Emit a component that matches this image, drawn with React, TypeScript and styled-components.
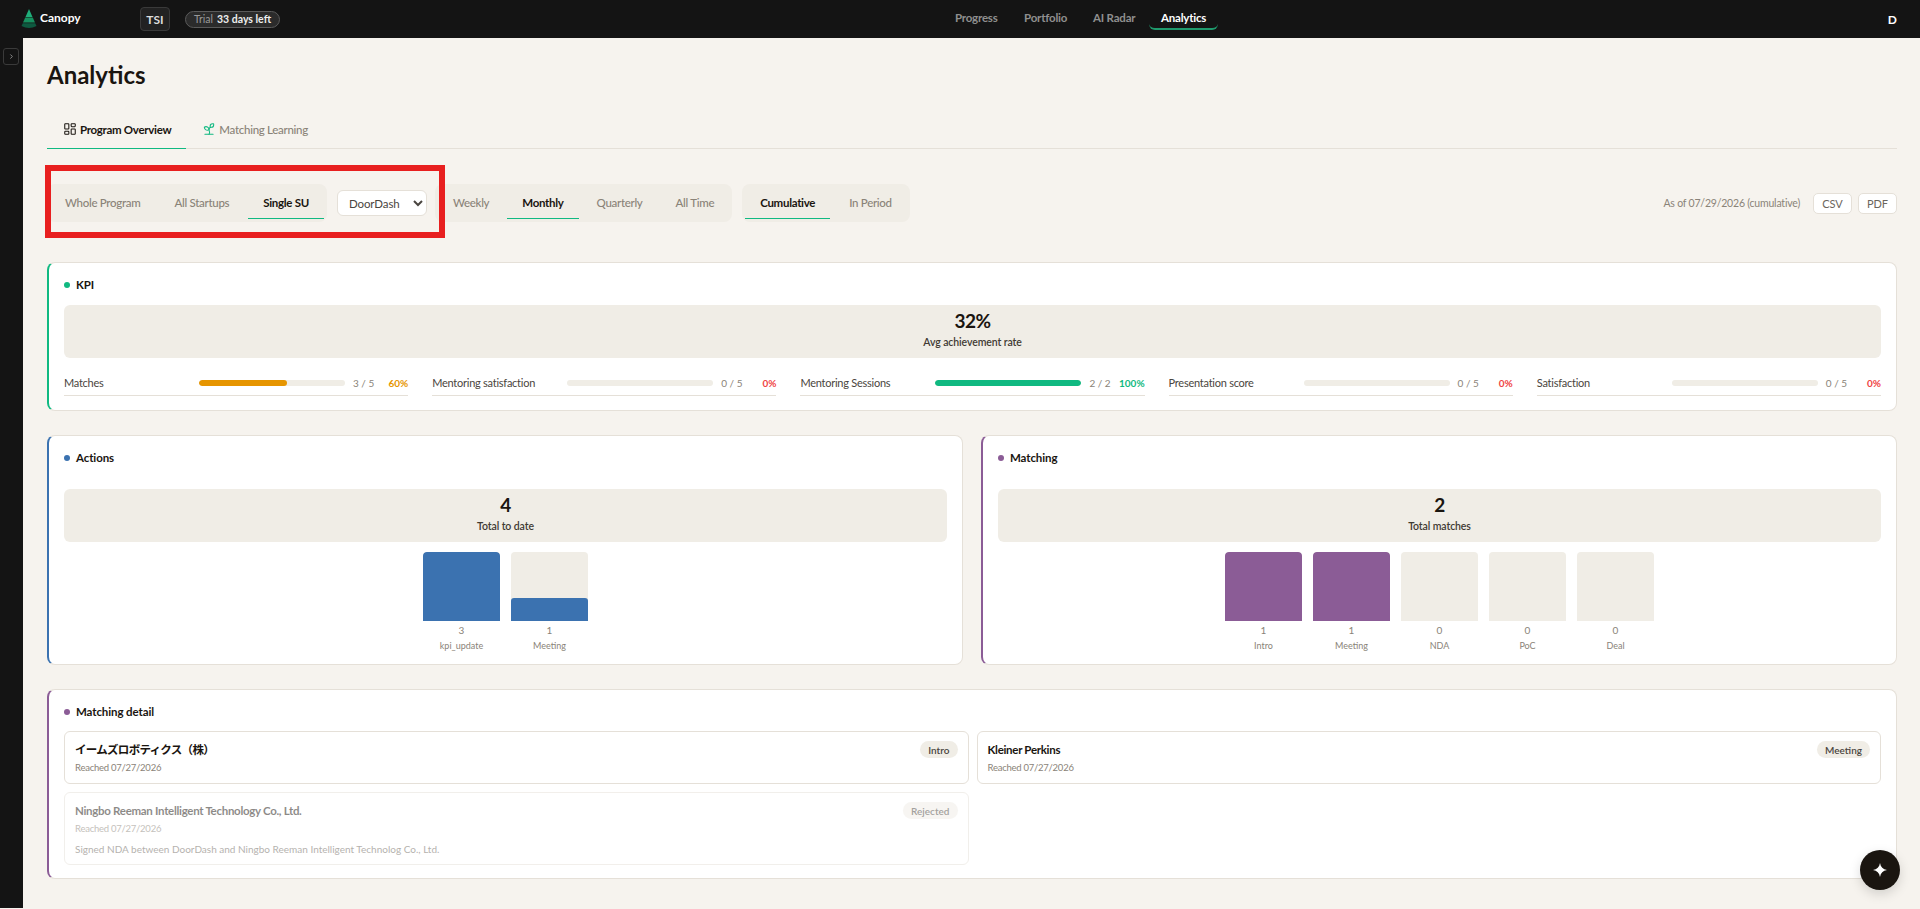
import styled, { createGlobalStyle } from 'styled-components';
import { LayoutDashboard, Sprout, ChevronRight } from 'lucide-react';

const GlobalStyle = createGlobalStyle`
  html, body {
    margin: 0;
    padding: 0;
    background: #f6f3ee;
    font-family: 'Lato', 'Noto Sans CJK JP', sans-serif;
    color: #1a1510;
  }
  * { box-sizing: border-box; }
`;

const GREEN = '#10b981';
const BLUE = '#3b72b0';
const PURPLE = '#8b5c96';

const kpis = [
  { label: 'Matches', value: '3 / 5', pct: 60, color: '#e69500' },
  { label: 'Mentoring satisfaction', value: '0 / 5', pct: 0, color: '#ef4444' },
  { label: 'Mentoring Sessions', value: '2 / 2', pct: 100, color: GREEN },
  { label: 'Presentation score', value: '0 / 5', pct: 0, color: '#ef4444' },
  { label: 'Satisfaction', value: '0 / 5', pct: 0, color: '#ef4444' },
];

const actions = [
  { label: 'kpi_update', value: 3, fill: 100 },
  { label: 'Meeting', value: 1, fill: 33.3 },
];

const funnel = [
  { label: 'Intro', value: 1, fill: 100 },
  { label: 'Meeting', value: 1, fill: 100 },
  { label: 'NDA', value: 0, fill: 0 },
  { label: 'PoC', value: 0, fill: 0 },
  { label: 'Deal', value: 0, fill: 0 },
];

function Logo() {
  return (
    <svg width="16" height="20" viewBox="0 0 16 20">
      <path d="M8 0 L11.5 8 H4.5 Z" fill="#1fae7a" />
      <path d="M4.2 8.6 H11.8 L14 13.6 H2 Z" fill="#17905f" />
      <path d="M1.8 14.2 H14.2 L15.5 17 Q8 21 .5 17 Z" fill="#0e5a40" />
    </svg>
  );
}

function Bars({ items, color }: { items: { label: string; value: number; fill: number }[]; color: string }) {
  return (
    <BarRow>
      {items.map((item) => (
        <BarCol key={item.label}>
          <BarTrack>
            <BarFill $color={color} style={{ height: `${item.fill}%` }} />
          </BarTrack>
          <BarValue>{item.value}</BarValue>
          <BarLabel>{item.label}</BarLabel>
        </BarCol>
      ))}
    </BarRow>
  );
}

export default function App() {
  return (
    <>
      <GlobalStyle />
      <TopBar>
        <Brand>
          <Logo />
          <BrandName>Canopy</BrandName>
        </Brand>
        <OrgChip>TSI</OrgChip>
        <TrialPill>
          Trial <b>33 days left</b>
        </TrialPill>
        <Nav>
          <NavItem>Progress</NavItem>
          <NavItem>Portfolio</NavItem>
          <NavItem>AI Radar</NavItem>
          <NavItem $active>Analytics</NavItem>
        </Nav>
        <UserInitial>D</UserInitial>
      </TopBar>
      <Body>
        <Rail>
          <RailToggle>
            <ChevronRight size={7} strokeWidth={3} />
          </RailToggle>
        </Rail>
        <Main>
          <Title>Analytics</Title>
          <Tabs>
            <Tab $active>
              <LayoutDashboard size={14} strokeWidth={1.8} />
              Program Overview
            </Tab>
            <Tab>
              <Sprout size={14} strokeWidth={1.8} color={GREEN} />
              Matching Learning
            </Tab>
          </Tabs>

          <FilterBar>
            <Segment>
              <SegButton>Whole Program</SegButton>
              <SegButton>All Startups</SegButton>
              <SegButton $active>Single SU</SegButton>
            </Segment>
            <StartupSelect defaultValue="DoorDash">
              <option>DoorDash</option>
            </StartupSelect>
            <Segment $gap={3}>
              <SegButton>Weekly</SegButton>
              <SegButton $active>Monthly</SegButton>
              <SegButton>Quarterly</SegButton>
              <SegButton>All Time</SegButton>
            </Segment>
            <Segment>
              <SegButton $active>Cumulative</SegButton>
              <SegButton>In Period</SegButton>
            </Segment>
            <AsOf>As of 07/29/2026 (cumulative)</AsOf>
            <ExportButton>CSV</ExportButton>
            <ExportButton>PDF</ExportButton>
            <Highlight />
          </FilterBar>

          <Card $accent={GREEN}>
            <CardHead $gap={13}>
              <Dot $color={GREEN} />
              KPI
            </CardHead>
            <Summary>
              <BigNumber>32%</BigNumber>
              <SummaryLabel>Avg achievement rate</SummaryLabel>
            </Summary>
            <KpiGrid>
              {kpis.map((kpi) => (
                <KpiRow key={kpi.label}>
                  <KpiLabel>{kpi.label}</KpiLabel>
                  <KpiTrack>
                    <KpiFill $color={kpi.color} style={{ width: `${kpi.pct}%` }} />
                  </KpiTrack>
                  <KpiValue>{kpi.value}</KpiValue>
                  <KpiPct $color={kpi.color}>{kpi.pct}%</KpiPct>
                </KpiRow>
              ))}
            </KpiGrid>
          </Card>

          <TwoCol>
            <Card $accent={BLUE}>
              <CardHead $gap={24}>
                <Dot $color={BLUE} />
                Actions
              </CardHead>
              <Summary>
                <BigNumber>4</BigNumber>
                <SummaryLabel>Total to date</SummaryLabel>
              </Summary>
              <Bars items={actions} color={BLUE} />
            </Card>
            <Card $accent={PURPLE}>
              <CardHead $gap={24}>
                <Dot $color={PURPLE} />
                Matching
              </CardHead>
              <Summary>
                <BigNumber>2</BigNumber>
                <SummaryLabel>Total matches</SummaryLabel>
              </Summary>
              <Bars items={funnel} color={PURPLE} />
            </Card>
          </TwoCol>

          <Card $accent={PURPLE}>
            <CardHead $gap={12}>
              <Dot $color={PURPLE} />
              Matching detail
            </CardHead>
            <DetailGrid>
              <DetailItem>
                <DetailTop>
                  <JapaneseName>イームズロボティクス（株）</JapaneseName>
                  <Badge>Intro</Badge>
                </DetailTop>
                <DetailDate>Reached 07/27/2026</DetailDate>
              </DetailItem>
              <DetailItem>
                <DetailTop>
                  <DetailName>Kleiner Perkins</DetailName>
                  <Badge>Meeting</Badge>
                </DetailTop>
                <DetailDate>Reached 07/27/2026</DetailDate>
              </DetailItem>
              <DetailItem $faded>
                <DetailTop>
                  <DetailName>Ningbo Reeman Intelligent Technology Co., Ltd.</DetailName>
                  <Badge>Rejected</Badge>
                </DetailTop>
                <DetailDate>Reached 07/27/2026</DetailDate>
                <DetailNote>Signed NDA between DoorDash and Ningbo Reeman Intelligent Technolog Co., Ltd.</DetailNote>
              </DetailItem>
            </DetailGrid>
          </Card>
        </Main>
      </Body>
      <Fab>
        <svg width="14" height="14" viewBox="0 0 14 14">
          <path d="M7 0 C7.6 4 10 6.4 14 7 C10 7.6 7.6 10 7 14 C6.4 10 4 7.6 0 7 C4 6.4 6.4 4 7 0 Z" fill="#fff" />
        </svg>
      </Fab>
    </>
  );
}

const TopBar = styled.header`
  height: 38px;
  background: #141414;
  display: flex;
  align-items: center;
  padding: 0 23px 0 21px;
  position: relative;
  color: #fff;
`;

const Brand = styled.div`
  display: flex;
  align-items: center;
  gap: 3px;
  width: 119px;
`;

const BrandName = styled.span`
  font-size: 12px;
  font-weight: 700;
  margin-top: -4px;
`;

const OrgChip = styled.div`
  width: 30px;
  height: 24px;
  display: flex;
  align-items: center;
  justify-content: center;
  background: #222;
  border: 1px solid #3a3a3a;
  border-radius: 4px;
  font-size: 12px;
  font-weight: 700;
  color: #ddd;
`;

const TrialPill = styled.div`
  margin-left: 15px;
  height: 17px;
  width: 95px;
  display: flex;
  align-items: center;
  justify-content: center;
  gap: 4px;
  background: #2b2b2b;
  border: 1px solid #5a5a5a;
  border-radius: 9px;
  font-size: 10.5px;
  color: #999;

  b {
    color: #eee;
    font-weight: 700;
  }
`;

const Nav = styled.nav`
  position: absolute;
  left: 942px;
  top: 0;
  height: 38px;
  padding-top: 6px;
  display: flex;
  align-items: flex-start;
`;

const NavItem = styled.span<{ $active?: boolean }>`
  height: 24px;
  width: 69px;
  padding-left: ${(p) => (p.$active ? '12px' : '13px')};
  display: flex;
  align-items: center;
  font-size: 11.5px;
  letter-spacing: -0.2px;
  font-weight: 700;
  color: ${(p) => (p.$active ? '#fff' : '#8f8f8f')};
  border-bottom: ${(p) => (p.$active ? '2px solid #1f9a6d' : '2px solid transparent')};
  border-radius: 0 0 6px 6px;
`;

const UserInitial = styled.div`
  margin-left: auto;
  font-size: 12px;
  font-weight: 700;
  color: #fff;
`;

const Body = styled.div`
  display: flex;
  background: #141414;
`;

const Rail = styled.aside`
  width: 23px;
  flex: none;
  padding: 10px 3px;
`;

const RailToggle = styled.div`
  width: 16px;
  height: 17px;
  border: 1px solid #3a3a3a;
  border-radius: 3px;
  display: flex;
  align-items: center;
  justify-content: center;
  color: #999;
`;

const Main = styled.main`
  flex: 1;
  min-width: 0;
  background: #f6f3ee;
  padding: 0 23px 29px 24px;
`;

const Title = styled.h1`
  margin: 0;
  padding-top: 22px;
  font-size: 24px;
  line-height: 30px;
  font-weight: 700;
`;

const Tabs = styled.div`
  margin-top: 28px;
  display: flex;
  border-bottom: 1px solid #e5e0d8;
`;

const Tab = styled.div<{ $active?: boolean }>`
  height: 31px;
  padding: 0 15px 8px 16px;
  display: flex;
  align-items: center;
  gap: 3px;
  font-size: 11.5px;
  letter-spacing: -0.3px;
  font-weight: ${(p) => (p.$active ? 700 : 500)};
  color: ${(p) => (p.$active ? '#1a1510' : '#8a8378')};
  border-bottom: 1px solid ${(p) => (p.$active ? GREEN : 'transparent')};
  margin-bottom: -1px;
`;

const FilterBar = styled.div`
  position: relative;
  margin-top: 35px;
  display: flex;
  align-items: center;
  gap: 10px;
`;

const Segment = styled.div<{ $gap?: number }>`
  height: 38px;
  padding: 3px;
  display: flex;
  gap: ${(p) => p.$gap ?? 4}px;
  background: #f0ede6;
  border-radius: 8px;
`;

const SegButton = styled.div<{ $active?: boolean }>`
  padding: 0 15px;
  display: flex;
  align-items: center;
  font-size: 11.5px;
  letter-spacing: -0.3px;
  font-weight: ${(p) => (p.$active ? 700 : 500)};
  color: ${(p) => (p.$active ? '#1a1510' : '#8a8378')};
  border-bottom: 1px solid ${(p) => (p.$active ? GREEN : 'transparent')};
`;

const StartupSelect = styled.select`
  width: 90px;
  height: 26px;
  margin-right: -2px;
  padding: 0 5px 0 7px;
  background: #fff;
  border: 1px solid #e5e0d8;
  border-radius: 6px;
  font-family: inherit;
  font-size: 11.5px;
  letter-spacing: -0.1px;
  color: #4a4540;
`;

const AsOf = styled.span`
  margin-left: auto;
  margin-right: 7px;
  font-size: 10.5px;
  letter-spacing: -0.2px;
  color: #8a8378;
`;

const ExportButton = styled.button`
  width: 39px;
  height: 21px;
  margin-left: -4px;
  padding: 0;
  background: #fff;
  border: 1px solid #e5e0d8;
  border-radius: 5px;
  font-family: inherit;
  font-size: 11px;
  color: #6b655c;
`;

const Highlight = styled.div`
  position: absolute;
  left: -2px;
  top: -19px;
  width: 400px;
  height: 73px;
  border: 6px solid #e81f1f;
  pointer-events: none;
`;

const Card = styled.section<{ $accent: string }>`
  margin-top: 24px;
  background: #fff;
  border: 1px solid #e5e0d8;
  border-left: 2px solid ${(p) => p.$accent};
  border-radius: 8px;
  padding: 15px 15px 12px 15px;
  ${FilterBar} + & {
    margin-top: 40px;
  }
`;

const CardHead = styled.div<{ $gap: number }>`
  display: flex;
  align-items: center;
  gap: 6px;
  font-size: 11.5px;
  letter-spacing: -0.1px;
  line-height: 14px;
  font-weight: 700;
  margin-bottom: ${(p) => p.$gap}px;
`;

const Dot = styled.span<{ $color: string }>`
  width: 6px;
  height: 6px;
  border-radius: 50%;
  background: ${(p) => p.$color};
`;

const Summary = styled.div`
  height: 53px;
  background: #f0ede6;
  border-radius: 6px;
  display: flex;
  flex-direction: column;
  align-items: center;
  padding-top: 4px;
`;

const BigNumber = styled.div`
  font-size: 19px;
  line-height: 24px;
  font-weight: 700;
  letter-spacing: -0.5px;
`;

const SummaryLabel = styled.div`
  margin-top: 2px;
  font-size: 10.5px;
  letter-spacing: -0.1px;
  line-height: 14px;
  font-weight: 600;
  color: #3f3a33;
`;

const KpiGrid = styled.div`
  margin: 12px 0 2px;
  display: grid;
  grid-template-columns: repeat(5, 1fr);
  gap: 24px;
`;

const KpiRow = styled.div`
  height: 26px;
  display: flex;
  align-items: center;
  border-bottom: 1px solid #e5e0d8;
`;

const KpiLabel = styled.span`
  width: 135px;
  flex: none;
  margin-top: -1px;
  font-size: 11px;
  letter-spacing: -0.25px;
  color: #4a4540;
`;

const KpiTrack = styled.div`
  width: 146px;
  height: 6px;
  flex: none;
  background: #f0ede6;
  border-radius: 3px;
  overflow: hidden;
`;

const KpiFill = styled.div<{ $color: string }>`
  height: 100%;
  background: ${(p) => p.$color};
  border-radius: 3px;
`;

const KpiValue = styled.span`
  margin-left: 8px;
  font-size: 10px;
  color: #8a8378;
`;

const KpiPct = styled.span<{ $color: string }>`
  margin-left: auto;
  font-size: 10px;
  font-weight: 700;
  color: ${(p) => p.$color};
`;

const TwoCol = styled.div`
  margin-top: 24px;
  display: grid;
  grid-template-columns: 1fr 1fr;
  gap: 18px;

  & > ${Card} {
    margin-top: 0;
  }
`;

const BarRow = styled.div`
  margin-top: 10px;
  display: flex;
  justify-content: center;
  gap: 11px;
`;

const BarCol = styled.div`
  width: 77px;
  text-align: center;
`;

const BarTrack = styled.div`
  height: 69px;
  display: flex;
  align-items: flex-end;
  background: #f0ede6;
  border-radius: 4px 4px 0 0;
  overflow: hidden;
`;

const BarFill = styled.div<{ $color: string }>`
  width: 100%;
  background: ${(p) => p.$color};
  border-radius: 3px 3px 0 0;
`;

const BarValue = styled.div`
  margin-top: 3px;
  font-size: 10px;
  line-height: 12px;
  color: #8a8378;
`;

const BarLabel = styled.div`
  margin-top: 4px;
  font-size: 9px;
  line-height: 12px;
  color: #8a8378;
`;

const DetailGrid = styled.div`
  margin-bottom: 1px;
  display: grid;
  grid-template-columns: 1fr 1fr;
  gap: 8px;
`;

const DetailItem = styled.div<{ $faded?: boolean }>`
  min-height: 53px;
  padding: 9px 10px 8px 10px;
  border: 1px solid #e5e0d8;
  border-radius: 6px;
  opacity: ${(p) => (p.$faded ? 0.5 : 1)};
`;

const DetailTop = styled.div`
  display: flex;
  justify-content: space-between;
  align-items: flex-start;
`;

const DetailName = styled.span`
  font-size: 11.5px;
  letter-spacing: -0.3px;
  line-height: 17px;
  font-weight: 700;
`;

const JapaneseName = styled(DetailName)`
  letter-spacing: -0.7px;
`;

const Badge = styled.span`
  height: 17px;
  padding: 0 8px;
  display: flex;
  align-items: center;
  background: #f0ede6;
  border-radius: 9px;
  font-size: 10px;
  font-weight: 600;
  color: #4a4540;
`;

const DetailDate = styled.div`
  margin-top: 3px;
  font-size: 9.5px;
  letter-spacing: -0.25px;
  line-height: 13px;
  color: #8a8378;
`;

const DetailNote = styled.div`
  margin-top: 8px;
  font-size: 10px;
  line-height: 13px;
  color: #6b655c;
`;

const Fab = styled.div`
  position: fixed;
  left: 1860px;
  top: 850px;
  width: 40px;
  height: 40px;
  border-radius: 50%;
  background: #1a1510;
  display: flex;
  align-items: center;
  justify-content: center;
  box-shadow: 0 4px 12px rgba(0, 0, 0, 0.15);
`;
